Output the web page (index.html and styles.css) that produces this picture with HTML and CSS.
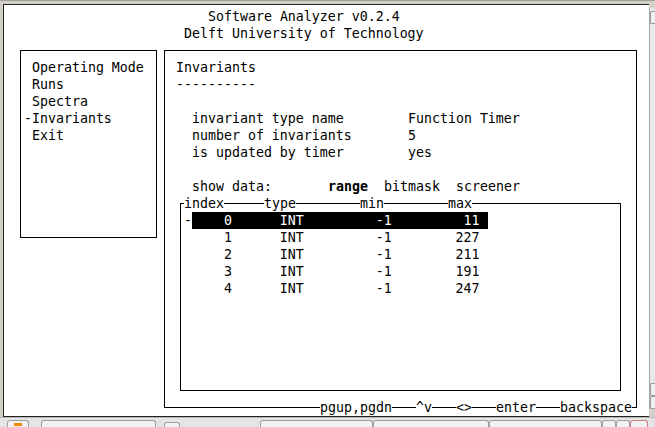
FILE: index.html
```html
<!DOCTYPE html>
<html>
<head>
<meta charset="utf-8">
<title>Software Analyzer</title>
<link rel="stylesheet" href="styles.css">
</head>
<body>
<div class="screen">
  <div class="window">
    <div class="term">
      <div class="box box-menu"></div>
      <div class="box box-main"></div>
      <div class="box box-table"></div>

      <div class="t r0 c25">Software Analyzer v0.2.4</div>
      <div class="t r1 c22">Delft University of Technology</div>

      <div class="t r3 c3">Operating Mode</div>
      <div class="t r4 c3">Runs</div>
      <div class="t r5 c3">Spectra</div>
      <div class="t r6 c2">-Invariants</div>
      <div class="t r7 c3">Exit</div>

      <div class="t r3 c21">Invariants</div>
      <div class="t r4 c21">----------</div>

      <div class="t r6 c23">invariant type name</div>
      <div class="t r6 c50">Function Timer</div>
      <div class="t r7 c23">number of invariants</div>
      <div class="t r7 c50">5</div>
      <div class="t r8 c23">is updated by timer</div>
      <div class="t r8 c50">yes</div>

      <div class="t r10 c23">show data:</div>
      <div class="t r10 c40 bold">range</div>
      <div class="t r10 c47">bitmask</div>
      <div class="t r10 c56">screener</div>

      <div class="t r11 c22 label">index</div>
      <div class="t r11 c32 label">type</div>
      <div class="t r11 c44 label">min</div>
      <div class="t r11 c55 label">max</div>

      <div class="t r12 c22">-</div>
      <div class="t r12 c23 selected">    0      INT         -1         11 </div>
      <div class="t r13 c23">    1      INT         -1        227</div>
      <div class="t r14 c23">    2      INT         -1        211</div>
      <div class="t r15 c23">    3      INT         -1        191</div>
      <div class="t r16 c23">    4      INT         -1        247</div>

      <div class="t r23 c39 label">pgup,pgdn</div>
      <div class="t r23 c51 label">^v</div>
      <div class="t r23 c56 label">&lt;&gt;</div>
      <div class="t r23 c61 label">enter</div>
      <div class="t r23 c69 label">backspace</div>
    </div>
    <div class="scrollbar">
      <div class="sb-btn sb-top"></div>
      <div class="sb-trough"></div>
      <div class="sb-btn"></div>
      <div class="sb-btn"></div>
    </div>
  </div>
  <div class="taskbar">
    <div class="tb-item tb-start"><span class="tb-icon"></span></div>
    <div class="tb-item tb-w1"></div>
    <div class="tb-item tb-small"></div>
    <div class="tb-item tb-w2"></div>
    <div class="tb-item tb-w3"></div>
    <div class="tb-item tb-w4"></div>
    <div class="tb-item tb-sq"></div>
    <div class="tb-item tb-sq"></div>
    <div class="tb-item tb-red"></div>
  </div>
</div>
</body>
</html>
```

FILE: styles.css
```css
html, body {
  margin: 0;
  padding: 0;
  background: #ffffff;
}

.screen {
  width: 655px;
  height: 427px;
  overflow: hidden;
  display: flex;
  flex-direction: column;
  background: #d6d6d6;
}

.window {
  display: flex;
  height: 418px;
  padding: 3px 0 0 3px;
  background: #d4d0c8;
  box-sizing: border-box;
  border-top: 1px solid #a0a0a0;
}

.term {
  display: grid;
  grid-template-columns: repeat(80, 8px);
  grid-template-rows: repeat(24, 17px);
  width: 640px;
  height: 408px;
  padding: 3px 1px 0 4px;
  background: #ffffff;
  border-top: 1px solid #202020;
  border-left: 1px solid #202020;
  border-bottom: 1px solid #202020;
  font-family: "DejaVu Sans Mono", monospace;
  font-size: 13.288px;
  line-height: 17px;
  color: #000000;
}

.scrollbar {
  flex: 1;
  display: flex;
  flex-direction: column;
  margin-top: 4px;
  margin-bottom: 8px;
  border-left: 1px solid #a8a8a8;
  background: #e8e8e8;
}

.sb-btn {
  height: 11px;
  background: #f0f0f0;
  border: 1px solid #9a9a9a;
  border-right: none;
  border-radius: 2px 0 0 2px;
}

.sb-top {
  margin-top: 3px;
}

.sb-trough {
  flex: 1;
}

.box {
  border: 1px solid #000000;
  margin: 8px 3px 8px 4px;
}

.box-menu {
  grid-column: 2 / 20;
  grid-row: 3 / 15;
}

.box-main {
  grid-column: 20 / 80;
  grid-row: 3 / 25;
}

.box-table {
  grid-column: 22 / 78;
  grid-row: 12 / 24;
}

.t {
  white-space: pre;
  grid-column-end: span 40;
  justify-self: start;
  height: 17px;
}

.label {
  background: #ffffff;
}

.bold {
  font-weight: bold;
}

.selected {
  background: #000000;
  color: #ffffff;
}

.r0 { grid-row: 1; }
.r1 { grid-row: 2; }
.r3 { grid-row: 4; }
.r4 { grid-row: 5; }
.r5 { grid-row: 6; }
.r6 { grid-row: 7; }
.r7 { grid-row: 8; }
.r8 { grid-row: 9; }
.r10 { grid-row: 11; }
.r11 { grid-row: 12; }
.r12 { grid-row: 13; }
.r13 { grid-row: 14; }
.r14 { grid-row: 15; }
.r15 { grid-row: 16; }
.r16 { grid-row: 17; }
.r23 { grid-row: 24; }

.c2 { grid-column-start: 3; }
.c3 { grid-column-start: 4; }
.c21 { grid-column-start: 22; }
.c22 { grid-column-start: 23; }
.c23 { grid-column-start: 24; }
.c25 { grid-column-start: 26; }
.c32 { grid-column-start: 33; }
.c39 { grid-column-start: 40; }
.c40 { grid-column-start: 41; }
.c44 { grid-column-start: 45; }
.c47 { grid-column-start: 48; }
.c50 { grid-column-start: 51; }
.c51 { grid-column-start: 52; }
.c55 { grid-column-start: 56; }
.c56 { grid-column-start: 57; }
.c61 { grid-column-start: 62; }
.c69 { grid-column-start: 70; grid-column-end: span 11; }

.taskbar {
  flex: 1;
  display: flex;
  align-items: flex-start;
  padding: 2px 0 0 7px;
  background: #e4e4e4;
  border-top: 1px solid #b8b8b8;
}

.tb-item {
  height: 10px;
  border: 1px solid #a0a0a0;
  border-bottom: none;
  border-radius: 3px 3px 0 0;
  background: #f2f2f2;
  box-sizing: border-box;
}

.tb-start {
  width: 22px;
  display: flex;
  justify-content: center;
  padding-top: 2px;
}

.tb-icon {
  width: 8px;
  height: 3px;
  background: #f08a00;
}

.tb-w1 { width: 115px; margin-left: 12px; }
.tb-small { width: 16px; margin-left: 8px; height: 8px; margin-top: 2px; }
.tb-w2 { width: 113px; margin-left: 80px; }
.tb-w3 { width: 116px; }
.tb-w4 { width: 113px; }
.tb-sq { width: 14px; }
.tb-red { width: 18px; border-color: #d08080; }
```
